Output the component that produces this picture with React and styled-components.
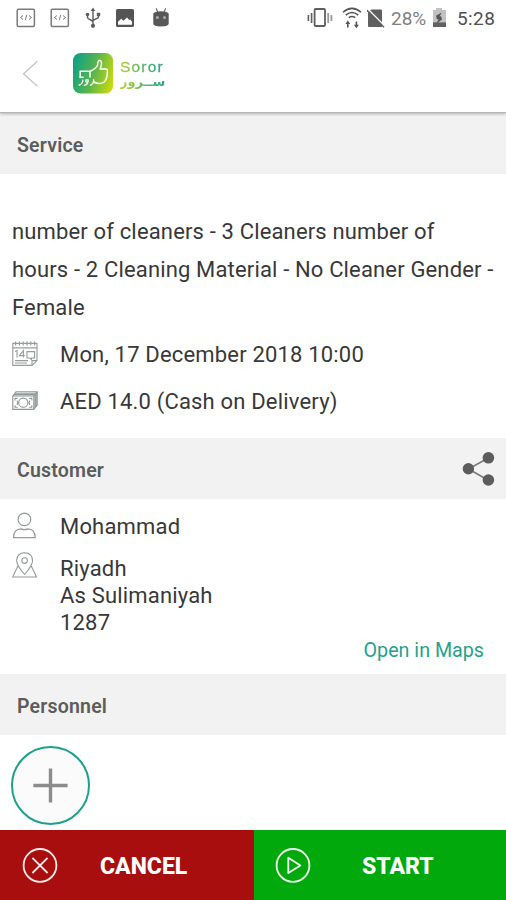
import React from "react";
import styled, { createGlobalStyle } from "styled-components";

const GlobalStyle = createGlobalStyle`
  * {
    box-sizing: border-box;
  }
  body {
    margin: 0;
    background: #fff;
    font-family: Roboto, "Noto Sans", sans-serif;
  }
`;

const CodeIcon = () => (
  <svg width="20" height="20" viewBox="0 0 20 20" fill="none" stroke="#7a7a7a">
    <rect x="1.2" y="1.2" width="17.2" height="17.2" rx="1.2" strokeWidth="1.5" />
    <path d="M7 7.5 4.5 9.5 7 11.5M13 7.5l2.5 2-2.5 2M10.8 6.8 9.2 12.2" strokeWidth="1" />
  </svg>
);

const UsbIcon = () => (
  <svg width="16" height="22" viewBox="0 0 16 22" fill="none" stroke="#5c5c5c" strokeWidth="1.4">
    <path d="M8 3v15M2.5 8v2.5c0 2 5.5 2.5 5.5 4.5M13.5 8v2c0 2-5.5 2-5.5 4" />
    <path d="m8 .5 2.4 3.5H5.6z" fill="#5c5c5c" stroke="none" />
    <circle cx="8" cy="18.8" r="2.1" fill="#5c5c5c" stroke="none" />
    <circle cx="2.5" cy="7.5" r="1.8" fill="#5c5c5c" stroke="none" />
    <path d="M11.8 5.8h3.4v3.4h-3.4z" fill="#5c5c5c" stroke="none" />
  </svg>
);

const PhotoIcon = () => (
  <svg width="18" height="18" viewBox="0 0 18 18">
    <rect width="18" height="18" rx="1.5" fill="#555" />
    <path d="M2 15.8v-3l3.2-3 2.3 2 3.6-3.3 2 2.4 1.2-.5 1.7 2.4v3z" fill="#fff" />
  </svg>
);

const RobotIcon = () => (
  <svg width="18" height="20" viewBox="0 0 18 20">
    <path d="m4.2 .4 1.7 4M13.6 .4 12 4.4" stroke="#5c5c5c" strokeWidth="1.1" />
    <path d="M1.3 5.4Q3.5 3.2 9 3.2t7.7 2.2v10q0 2.9-7.7 3.1-7.7-.2-7.7-3.1z" fill="#585858" />
    <circle cx="5.4" cy="9.4" r="1.5" fill="#aaa" />
    <circle cx="12.5" cy="9.4" r="1.5" fill="#aaa" />
  </svg>
);

const VibrateIcon = () => (
  <svg width="26" height="20" viewBox="0 0 26 20" fill="none" stroke="#5f5f5f">
    <rect x="7.6" y="1" width="10.4" height="17" rx="1" strokeWidth="1.8" />
    <path d="M4.6 5v10M1.4 7v6" strokeWidth="1.6" />
    <path d="M21.2 5v10M24.4 7v6" strokeWidth="1.8" stroke="#999" />
  </svg>
);

const WifiIcon = () => (
  <svg width="20" height="22" viewBox="0 0 20 22" fill="none" stroke="#555">
    <path d="M1 5.3Q10-2.6 19 5.3M3.8 8.1q6.2-5.2 12.4 0M6.8 10.7q3.2-2.5 6.4 0" strokeWidth="1.5" />
    <path d="M5.8 20.5v-4M14.4 14.5v4" strokeWidth="1.6" />
    <path d="m5.8 13.5 2.5 3.6h-5zM14.4 21.3l2.5-3.6h-5z" fill="#555" stroke="none" />
  </svg>
);

const NoSimIcon = () => (
  <svg width="18" height="19" viewBox="0 0 18 19">
    <path d="M4.2.6H14q1 0 1 1V18H2q-1 0-1-1V3.5z" fill="#606060" />
    <path d="m1 .2 18 18" stroke="#fff" strokeWidth="1.5" />
    <path d="m0 1.3 17 17" stroke="#606060" strokeWidth="1.5" />
  </svg>
);

const BatteryIcon = () => (
  <svg width="14" height="20" viewBox="0 0 14 20">
    <path d="M3 0h6v2h4v17H0V2h3z" fill="#c2c2c2" />
    <path d="M0 14.4h13V19H0z" fill="#606060" />
    <path d="M8.8 4.6 3 7.8l1 3.6 1.8-.3L3 15.9l6-4.4-.8-3.2-1.7.2z" fill="#555" />
  </svg>
);

const BackIcon = () => (
  <svg width="16" height="28" viewBox="0 0 16 28" fill="none" stroke="#c6c6c6" strokeWidth="1.4">
    <path d="M15.4 2.2 1.6 14.8l13.8 12.4" />
  </svg>
);

const LogoMark = () => (
  <svg width="40" height="41" viewBox="0 0 40 41" fill="none">
    <defs>
      <linearGradient id="tile" x1="0" y1="0.35" x2="1" y2="0.65">
        <stop offset="0" stopColor="#12a184" />
        <stop offset="0.48" stopColor="#53b451" />
        <stop offset="1" stopColor="#c6d811" />
      </linearGradient>
    </defs>
    <rect width="40" height="40.5" rx="7.5" fill="url(#tile)" />
    <g stroke="#f4fbe9" strokeWidth="1.6" strokeLinejoin="round" strokeLinecap="round">
      <path d="M7.2 24.4v-6.2h10.2q5.4-2.4 7.2-6.2.2-4.6 1.8-4.7 2.6.2 2 4.8l-1.2 4 5-.4q2.6.4 2.2 2.6 0 6.4-2.2 9.6-1.8 2.6-4.8 2.6-4.2.2-6.8-1.4" />
      <path d="M17 18.6v5.4M7.2 24.2h3" />
      <path d="M6.2 32q3.4-.8 3.6-4.8M11.4 32.4q4-1 3.7-5.4-2.6-.9-2.4 1.5.9 1 2.4.3M17.4 32.2q3.4-.9 3.2-5.4M20.6 27.4q.4 2.4 3.2 2.2" strokeWidth="1.4" />
    </g>
  </svg>
);

const CalendarIcon = () => (
  <svg width="27" height="26" viewBox="0 0 27 26" fill="none" stroke="#969c9c" strokeWidth="1.1">
    <path d="M.8 2.4H25v17.2l-5 4.8H.8zM.8 6.9H25M20 24.4v-4.8h5" />
    <path d="M3.6 .4v4M7.4 .4v4M11.2 .4v4M15 .4v4M18.8 .4v4M22.6 .4v4" strokeWidth="1.2" />
    <path d="m3 10.6 2-1v7M11.4 16.6v-7l-4 5h5.4M15 10.6h7.6v6.4h-3.2v1.6l-1.7-1.6H15zM3 19.6h13M3 22h12" />
  </svg>
);

const CashIcon = () => (
  <svg width="27" height="20" viewBox="0 0 27 20" fill="none" stroke="#8f9696" strokeWidth="1.1">
    <path d="M.8 5h21v13.4h-21zM.8 5 4 .8h21.2v13.3l-3.4 4.3M21.8 5l3.4-4.2" />
    <path d="M2 3.6h20.8M3.2 2.2H24M23 3.6v13.2M24.2 2.2v13.2" />
    <circle cx="11.3" cy="11.7" r="4.6" />
    <path d="M3 9.4v-2h2.6M3 14.2v2h2.6M19.8 9.4v-2h-2.6M19.8 14.2v2h-2.6M5 9.6q1.4 2 0 4.3M17.8 9.6q-1.4 2 0 4.3" />
  </svg>
);

const PersonIcon = () => (
  <svg width="24" height="27" viewBox="0 0 24 27" fill="none" stroke="#949a9a" strokeWidth="1.2">
    <ellipse cx="12.4" cy="7.4" rx="6.3" ry="6.3" />
    <path d="M1.6 25.6q0-8.5 7.4-8.7 3.3 1.6 6.8 0 7.3.2 7.4 8.7z" />
  </svg>
);

const PlaceIcon = () => (
  <svg width="26" height="26" viewBox="0 0 26 26" fill="none" stroke="#949a9a" strokeWidth="1.1">
    <path d="M12.6 22.5Q4.6 13.5 4.6 8.6 4.8 1 12.6.8q7.8.2 8 7.8 0 4.9-8 13.9z" />
    <circle cx="12.6" cy="8.6" r="2.8" />
    <path d="M5.9 14 .7 25h23.8L19.3 14" />
  </svg>
);

const ShareIcon = () => (
  <svg width="34" height="36" viewBox="0 0 34 36" fill="#5c5c5c" stroke="#7a7a7a">
    <path d="M26.4 7 6.4 18l20 11.2" fill="none" strokeWidth="1.6" />
    <circle cx="6.4" cy="17.8" r="5.7" stroke="none" />
    <circle cx="26.4" cy="6.8" r="5.8" stroke="none" />
    <circle cx="26.4" cy="29" r="5.8" stroke="none" />
  </svg>
);

const PlusIcon = () => (
  <svg width="35" height="35" viewBox="0 0 35 35" stroke="#8c8c8c" strokeWidth="3.4">
    <path d="M17.5 .4v34.2M.4 17.5h34.2" />
  </svg>
);

const CancelIcon = () => (
  <svg width="36" height="36" viewBox="0 0 36 36" fill="none" stroke="#fbeaea" strokeWidth="1.8">
    <circle cx="18" cy="18.4" r="16.4" />
    <path d="m10.4 10.8 15.2 15.2M25.6 10.8 10.4 26" />
  </svg>
);

const PlayIcon = () => (
  <svg width="36" height="36" viewBox="0 0 36 36" fill="none" stroke="#ecfbec" strokeWidth="1.8">
    <circle cx="18" cy="18.4" r="16.4" />
    <path d="M13.3 10.7v15.4l12.1-7.7z" strokeLinejoin="round" />
  </svg>
);

const App = () => (
  <>
    <GlobalStyle />
    <Screen>
      <StatusBar>
        <StatusGroup $gap="15px">
          <CodePair>
            <CodeIcon />
            <CodeIcon />
          </CodePair>
          <UsbIcon />
          <PhotoIcon />
          <RobotSlot>
            <RobotIcon />
          </RobotSlot>
        </StatusGroup>
        <StatusGroup $gap="6px">
          <RingerPair>
            <VibrateIcon />
            <WifiIcon />
          </RingerPair>
          <NoSimIcon />
          <StatusText $width="40px" $color="#808080">28%</StatusText>
          <BatterySlot>
            <BatteryIcon />
          </BatterySlot>
          <StatusText $width="40px" $color="#505050" $spacing="0.4px">5:28</StatusText>
        </StatusGroup>
      </StatusBar>

      <AppBar>
        <BackIcon />
        <Logo>
          <LogoMark />
          <Wordmark>
            <LatinName>Soror</LatinName>
            <ArabicName lang="ar">ســرور</ArabicName>
          </Wordmark>
        </Logo>
      </AppBar>

      <SectionHeader>Service</SectionHeader>
      <ServiceBody>
        <Description>
          <Line>number of cleaners - 3 Cleaners number of</Line>
          <Line>hours - 2 Cleaning Material - No Cleaner Gender -</Line>
          <Line>Female</Line>
        </Description>
        <InfoRow $height="47px">
          <IconCell><CalendarIcon /></IconCell>
          <Info>Mon, 17 December 2018 10:00</Info>
        </InfoRow>
        <InfoRow $height="47px">
          <IconCell><CashIcon /></IconCell>
          <Info>AED 14.0 (Cash on Delivery)</Info>
        </InfoRow>
      </ServiceBody>

      <SectionHeader>
        Customer
        <ShareIcon />
      </SectionHeader>
      <CustomerBody>
        <InfoRow $height="29px">
          <IconCell><PersonIcon /></IconCell>
          <Info>Mohammad</Info>
        </InfoRow>
        <AddressRow>
          <IconCell><PlaceIcon /></IconCell>
          <Address>
            <Info>Riyadh</Info>
            <Info>As Sulimaniyah</Info>
            <Info>1287</Info>
          </Address>
        </AddressRow>
        <MapLink>Open in Maps</MapLink>
      </CustomerBody>

      <SectionHeader>Personnel</SectionHeader>
      <PersonnelBody>
        <AddButton aria-label="Add personnel">
          <PlusIcon />
        </AddButton>
      </PersonnelBody>

      <Footer>
        <FooterButton $color="#a80e0e" $width="254px" $inset="22px" $gap="42px">
          <CancelIcon />
          <FooterLabel>CANCEL</FooterLabel>
        </FooterButton>
        <FooterButton $color="#02a90d" $width="252px" $inset="21px" $gap="51px">
          <PlayIcon />
          <FooterLabel>START</FooterLabel>
        </FooterButton>
      </Footer>
    </Screen>
  </>
);

export default App;

const Screen = styled.div`
  width: 506px;
  height: 900px;
  display: flex;
  flex-direction: column;
  overflow: hidden;
  background: #fff;
`;

const StatusBar = styled.div`
  height: 36px;
  flex: none;
  display: flex;
  align-items: center;
  justify-content: space-between;
  padding: 0 9px 0 16px;
`;

const StatusGroup = styled.div`
  display: flex;
  align-items: center;
  gap: ${({ $gap }) => $gap};
`;

const CodePair = styled.div`
  display: flex;
  gap: 14px;
`;

const RobotSlot = styled.div`
  display: flex;
  margin-left: 3px;
`;

const BatterySlot = styled.div`
  display: flex;
  margin: 0 4px 0 -4px;
`;

const RingerPair = styled.div`
  display: flex;
  align-items: center;
  gap: 9px;
  margin-right: -1px;
`;

const StatusText = styled.span`
  width: ${({ $width }) => $width};
  font-size: 19px;
  line-height: 22px;
  white-space: nowrap;
  letter-spacing: ${({ $spacing }) => $spacing || "0"};
  color: ${({ $color }) => $color};
  padding-top: 2px;
`;

const AppBar = styled.header`
  height: 77px;
  flex: none;
  display: flex;
  align-items: center;
  padding: 0 0 2px 22px;
  gap: 35px;
  background: #fff;
  border-bottom: 1px solid #b5b5b5;
  box-shadow: 0 1px 3px rgba(0, 0, 0, 0.28);
  clip-path: inset(2px 0 -6px 0);
  z-index: 1;
`;

const Logo = styled.div`
  display: flex;
  align-items: center;
  gap: 7px;
`;

const Wordmark = styled.div`
  display: flex;
  flex-direction: column;
  align-items: flex-start;
  padding-top: 5px;
`;

const LatinName = styled.span`
  font-family: "Liberation Sans", sans-serif;
  font-size: 15.5px;
  line-height: 17px;
  letter-spacing: 1.2px;
  white-space: nowrap;
  color: transparent;
  background: linear-gradient(90deg, #b4cc2a, #4fb368 55%, #1f9f86);
  background-clip: text;
  -webkit-text-stroke: 0.3px transparent;
`;

const ArabicName = styled.span`
  font-family: "DejaVu Sans", sans-serif;
  font-size: 13px;
  font-weight: 700;
  line-height: 14px;
  padding-bottom: 4px;
  white-space: nowrap;
  color: transparent;
  background: linear-gradient(90deg, #c0d42a, #5dbb70 55%, #2aa58c);
  background-clip: text;
`;

const SectionHeader = styled.h2`
  height: 61px;
  flex: none;
  margin: 0;
  display: flex;
  align-items: center;
  justify-content: space-between;
  padding: 3px 10px 0 17px;
  background: #f2f2f2;
  color: #5c5c5c;
  font-size: 19.5px;
  font-weight: 600;
  letter-spacing: 0.2px;

  svg {
    margin-top: -3px;
  }
`;

const ServiceBody = styled.section`
  height: 264px;
  flex: none;
  padding: 39px 12px 0;
`;

const Description = styled.p`
  margin: 0;
  height: 118px;
`;

const Line = styled.span`
  display: block;
  font-size: 22px;
  line-height: 38px;
  white-space: nowrap;
  color: #383838;
  letter-spacing: 0.155px;
`;

const InfoRow = styled.div`
  height: ${({ $height }) => $height};
  display: flex;
  align-items: center;
`;

const IconCell = styled.div`
  width: 48px;
  flex: none;
  svg {
    display: block;
    margin-top: -2px;
  }
`;

const Info = styled.span`
  font-size: 22px;
  line-height: 27px;
  white-space: nowrap;
  color: #383838;
  letter-spacing: 0.18px;
`;

const CustomerBody = styled.section`
  height: 175px;
  flex: none;
  padding: 13px 12px 0;
`;

const AddressRow = styled.div`
  display: flex;
  margin-top: 14px;

  ${IconCell} {
    margin-top: -1px;
  }
`;

const Address = styled.address`
  display: flex;
  flex-direction: column;
  font-style: normal;
`;

const MapLink = styled.div`
  margin-top: 3px;
  padding-right: 10px;
  text-align: right;
  font-size: 19.7px;
  line-height: 24px;
  color: #1fa38c;
`;

const PersonnelBody = styled.section`
  flex: 1;
  padding: 11px 12px 0 11px;
`;

const AddButton = styled.button`
  width: 79px;
  height: 79px;
  display: flex;
  align-items: center;
  justify-content: center;
  padding: 0;
  border: 2px solid #1fa08a;
  border-radius: 50%;
  background: #fbfbfb;
`;

const Footer = styled.footer`
  height: 70px;
  flex: none;
  display: flex;
`;

const FooterButton = styled.button`
  width: ${({ $width }) => $width};
  display: flex;
  align-items: center;
  gap: ${({ $gap }) => $gap};
  padding: 0 0 0 ${({ $inset }) => $inset};
  border: none;
  background: ${({ $color }) => $color};
  color: #fff;
`;

const FooterLabel = styled.span`
  font-family: Roboto, sans-serif;
  font-size: 23px;
  font-weight: 800;
  padding-top: 2px;
`;
